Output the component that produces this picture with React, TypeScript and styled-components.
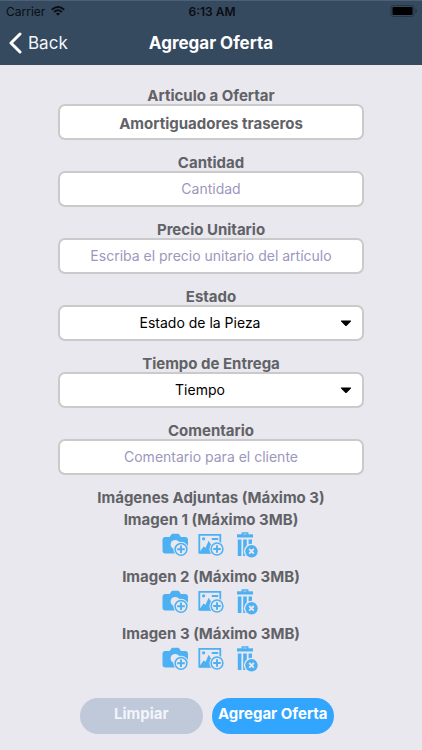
import React from "react";
import styled, { createGlobalStyle } from "styled-components";

const GlobalStyle = createGlobalStyle`
  * { box-sizing: border-box; }
  body {
    margin: 0;
    background: #e9e8ef;
    color: #616266;
    font-family: Inter, "Liberation Sans", sans-serif;
    font-size: 15px;
  }
  button, input, select { font: inherit; }
`;

const Header = styled.header`
  background: #35495f;
  border-top: 1px solid #4d6077;
`;

const StatusBar = styled.div`
  display: grid;
  grid-template-columns: 1fr auto 1fr;
  align-items: center;
  height: 20px;
  padding: 0 4px 0 6px;
  color: #0b0e13;
  font-size: 12px;
`;

const Carrier = styled.span`
  display: flex;
  align-items: center;
  gap: 6px;
`;

const Clock = styled.span`
  font-weight: 600;
`;

const BatterySlot = styled.span`
  display: flex;
  justify-content: flex-end;
`;

const NavBar = styled.nav`
  display: grid;
  grid-template-columns: 1fr auto 1fr;
  align-items: center;
  height: 44px;
  padding: 0 8px;
`;

const BackButton = styled.button`
  display: flex;
  align-items: center;
  justify-self: start;
  gap: 6px;
  padding: 0;
  border: 0;
  background: none;
  color: #f4f7fa;
  font-size: 17px;
`;

const Title = styled.h1`
  margin: 0;
  color: #fff;
  font-size: 17px;
  font-weight: 700;
`;

const Form = styled.form`
  display: flex;
  flex-direction: column;
  gap: 15px;
  padding: 23px 58px 16px;
`;

const Field = styled.div`
  display: flex;
  flex-direction: column;
`;

const Label = styled.label`
  font-weight: 700;
  line-height: 16px;
  text-align: center;
`;

const Input = styled.input<{ $strong?: boolean }>`
  width: 100%;
  height: 36px;
  padding: ${(p) => (p.$strong ? "2px 8px 0" : "0 8px 2px")};
  border: 2px solid #cacaca;
  border-radius: 7px;
  background: #fff;
  color: #616266;
  font-size: ${(p) => (p.$strong ? 15 : 14)}px;
  font-weight: ${(p) => (p.$strong ? 700 : 400)};
  text-align: center;
  &::placeholder { color: #9c97bd; opacity: 1; }
`;

const SelectBox = styled.div`
  display: grid;
  align-items: center;
  & > * { grid-area: 1 / 1; }
  & > svg { justify-self: end; margin-right: 12px; pointer-events: none; }
`;

const Select = styled.select`
  width: 100%;
  height: 36px;
  padding: 0 28px 2px 6px;
  border: 2px solid #cacaca;
  border-radius: 7px;
  background: #fff;
  color: #000;
  font-size: 14px;
  text-align: center;
  text-align-last: center;
  appearance: none;
`;

const Attachments = styled.section`
  display: flex;
  flex-direction: column;
  gap: 6px;
`;

const GroupTitle = styled.h2`
  margin: 0;
  font-size: 15px;
  font-weight: 700;
  line-height: 16px;
  text-align: center;
`;

const ImageList = styled.div`
  display: flex;
  flex-direction: column;
  gap: 11px;
`;

const ImageSlot = styled.div`
  display: flex;
  flex-direction: column;
  gap: 4px;
`;

const IconRow = styled.div`
  display: flex;
  justify-content: center;
  gap: 10px;
`;

const IconButton = styled.button`
  display: flex;
  padding: 0;
  border: 0;
  background: none;
  color: #4db0f2;
`;

const Actions = styled.div`
  display: flex;
  gap: 9px;
  margin-top: 11px;
  padding: 0 30px 0 22px;
`;

const ActionButton = styled.button<{ $primary?: boolean }>`
  flex: 1 1 0;
  height: 36px;
  padding: 0 0 5px;
  border: 0;
  border-radius: 18px;
  background: ${(p) => (p.$primary ? "#32a5ff" : "#bfc9da")};
  color: ${(p) => (p.$primary ? "#fff" : "#f2f5fa")};
  font-weight: 700;
  white-space: nowrap;
`;

const Badge = ({ cx, cy, cross }: { cx: number; cy: number; cross?: boolean }) => (
  <g>
    <circle cx={cx} cy={cy} r="7.6" fill="#e9e8ef" />
    {cross ? (
      <>
        <circle cx={cx} cy={cy} r="6.2" fill="currentColor" />
        <path
          d={`M${cx - 2.3} ${cy - 2.3}l4.6 4.6m0-4.6l-4.6 4.6`}
          stroke="#e9e8ef"
          strokeWidth="1.8"
        />
      </>
    ) : (
      <>
        <circle cx={cx} cy={cy} r="5.9" fill="none" stroke="currentColor" strokeWidth="1.5" />
        <path d={`M${cx - 3.8} ${cy}h7.6M${cx} ${cy - 3.8}v7.6`} stroke="currentColor" strokeWidth="1.9" />
      </>
    )}
  </g>
);

const CameraIcon = () => (
  <svg width="26" height="26" viewBox="0 0 26 26" aria-hidden="true">
    <path
      d="M3.4 5h4.3l1.6-2.5Q9.8 1.8 10.7 1.8h5.2q.9 0 1.4.7L18.9 5h4.2Q26 5 26 7.9v10.6q0 2.9-2.9 2.9H3.4Q.5 21.4 .5 18.5V7.9Q.5 5 3.4 5z"
      fill="currentColor"
    />
    <circle cx="13.2" cy="12.6" r="4.6" fill="#e9e8ef" />
    <Badge cx={19} cy={17.3} />
  </svg>
);

const PictureIcon = () => (
  <svg width="26" height="26" viewBox="0 0 26 26" aria-hidden="true">
    <path d="M1.3 2.8h21v18h-21z" fill="none" stroke="currentColor" strokeWidth="1.8" />
    <circle cx="5.6" cy="6.8" r="1.6" fill="currentColor" />
    <path d="M14.5 7h5" stroke="currentColor" strokeWidth="1.8" strokeLinecap="round" />
    <path d="M2 19.5l3.6-5 2 1.2L10.6 8.7l4 6.2 2-2 5 3.4v5H2z" fill="currentColor" />
    <Badge cx={19} cy={17} />
  </svg>
);

const TrashIcon = () => (
  <svg width="26" height="26" viewBox="0 0 26 26" aria-hidden="true">
    <path d="M8.3 3V.9h5.4V3" fill="none" stroke="currentColor" strokeWidth="1.5" />
    <path d="M3 2.3h16v3.2H3z" fill="currentColor" />
    <path d="M3.8 7.5h3.6V24H3.8zM9.2 7.5h3.6V24H9.2zM14.6 7.5H18V24h-3.4z" fill="currentColor" />
    <Badge cx={17.5} cy={19.3} cross />
  </svg>
);

const CaretIcon = () => (
  <svg width="12" height="7" viewBox="0 0 12 7" aria-hidden="true">
    <path d="M1.3 .5h9.4q.8.3.2 1L6.7 5.7q-.7.6-1.4 0L1.1 1.5q-.6-.7.2-1z" fill="#000" />
  </svg>
);

const WifiIcon = () => (
  <svg width="14" height="10" viewBox="0 0 14 10" aria-hidden="true">
    <g fill="none" stroke="#0b0e13" strokeWidth="1.9">
      <path d="M.8 3.7Q7-1.7 13.2 3.7" />
      <path d="M3.1 6Q7 2.7 10.9 6" />
    </g>
    <path d="M4.8 7.5Q7 5.8 9.2 7.5L7 9.8z" fill="#0b0e13" />
  </svg>
);

const BatteryIcon = () => (
  <svg width="28" height="12" viewBox="0 0 28 12" aria-hidden="true">
    <rect x="1" y=".5" width="23" height="11" rx="2.5" fill="none" stroke="#253446" />
    <rect x="2.5" y="2" width="20" height="8" rx="1" fill="#000" />
    <path d="M25.5 4v4q1.5-.5 1.5-2t-1.5-2z" fill="#253446" />
  </svg>
);

const BackIcon = () => (
  <svg width="14" height="22" viewBox="0 0 14 22" aria-hidden="true">
    <path
      d="M12 2L3 11l9 9"
      fill="none"
      stroke="#fff"
      strokeWidth="3"
      strokeLinecap="round"
      strokeLinejoin="round"
    />
  </svg>
);

const TextField = ({ id, label, ...rest }: {
  id: string;
  label: string;
  placeholder?: string;
  defaultValue?: string;
  $strong?: boolean;
}) => (
  <Field>
    <Label htmlFor={id}>{label}</Label>
    <Input id={id} type="text" {...rest} />
  </Field>
);

const SelectField = ({ id, label, option }: { id: string; label: string; option: string }) => (
  <Field>
    <Label htmlFor={id}>{label}</Label>
    <SelectBox>
      <Select id={id}>
        <option>{option}</option>
      </Select>
      <CaretIcon />
    </SelectBox>
  </Field>
);

export default function App() {
  return (
    <>
      <GlobalStyle />
      <Header>
        <StatusBar>
          <Carrier>
            Carrier
            <WifiIcon />
          </Carrier>
          <Clock>6:13 AM</Clock>
          <BatterySlot>
            <BatteryIcon />
          </BatterySlot>
        </StatusBar>
        <NavBar>
          <BackButton type="button">
            <BackIcon />
            Back
          </BackButton>
          <Title>Agregar Oferta</Title>
        </NavBar>
      </Header>
      <Form onSubmit={(e) => e.preventDefault()}>
        <TextField id="articulo" label="Articulo a Ofertar" defaultValue="Amortiguadores traseros" $strong />
        <TextField id="cantidad" label="Cantidad" placeholder="Cantidad" />
        <TextField id="precio" label="Precio Unitario" placeholder="Escriba el precio unitario del artículo" />
        <SelectField id="estado" label="Estado" option="Estado de la Pieza" />
        <SelectField id="tiempo" label="Tiempo de Entrega" option="Tiempo" />
        <TextField id="comentario" label="Comentario" placeholder="Comentario para el cliente" />
        <Attachments>
          <GroupTitle>Imágenes Adjuntas (Máximo 3)</GroupTitle>
          <ImageList>
            {[1, 2, 3].map((n) => (
              <ImageSlot key={n}>
                <GroupTitle as="h3">{`Imagen ${n} (Máximo 3MB)`}</GroupTitle>
                <IconRow>
                  <IconButton type="button" aria-label={`Tomar foto ${n}`}>
                    <CameraIcon />
                  </IconButton>
                  <IconButton type="button" aria-label={`Elegir imagen ${n}`}>
                    <PictureIcon />
                  </IconButton>
                  <IconButton type="button" aria-label={`Eliminar imagen ${n}`}>
                    <TrashIcon />
                  </IconButton>
                </IconRow>
              </ImageSlot>
            ))}
          </ImageList>
        </Attachments>
        <Actions>
          <ActionButton type="reset">Limpiar</ActionButton>
          <ActionButton type="submit" $primary>Agregar Oferta</ActionButton>
        </Actions>
      </Form>
    </>
  );
}
